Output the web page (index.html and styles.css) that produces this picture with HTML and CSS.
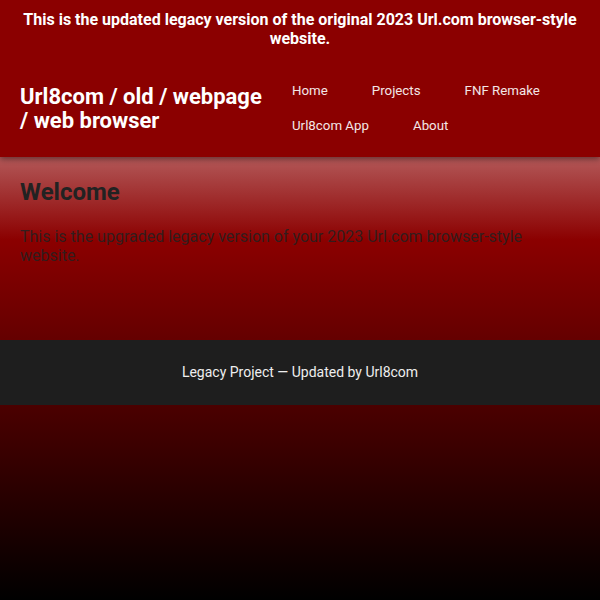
FILE: index.html
```html
<!DOCTYPE html>
<html lang="en">
<head>
<meta charset="utf-8">
<title>Url8com / old / webpage / web browser</title>
<link rel="stylesheet" href="styles.css">
</head>
<body>
<header class="site-header">
  <p class="banner">This is the updated legacy version of the original 2023 Url.com browser-style website.</p>
  <div class="header-bar">
    <h1 class="logo">Url8com / old / webpage / web browser</h1>
    <nav class="nav">
      <a href="#" class="nav-link">Home</a>
      <a href="#" class="nav-link">Projects</a>
      <a href="#" class="nav-link">FNF Remake</a>
      <a href="#" class="nav-link">Url8com App</a>
      <a href="#" class="nav-link">About</a>
    </nav>
  </div>
</header>
<main class="content">
  <h2 class="title">Welcome</h2>
  <p class="intro">This is the upgraded legacy version of your 2023 Url.com browser-style website.</p>
</main>
<footer class="site-footer">
  <p class="footer-text">Legacy Project — Updated by Url8com</p>
</footer>
</body>
</html>
```
FILE: styles.css
```css
html {
  background: #000;
}
body {
  margin: 0;
  min-height: 100vh;
  font-family: Roboto, "Liberation Sans", Arial, sans-serif;
  background: linear-gradient(to bottom, #ffffff 0%, #8b0000 40%, #000000 100%);
  color: #fff;
}
.site-header {
  background: #8b0000;
  box-shadow: 0 2px 6px rgba(0, 0, 0, 0.45);
  position: relative;
}
.banner {
  margin: 0;
  padding: 10px 20px 14px;
  font-size: 16px;
  line-height: 19px;
  font-weight: 700;
  text-align: center;
}
.header-bar {
  display: flex;
  align-items: center;
  padding: 21px 20px 23px;
  gap: 22px;
}
.logo {
  margin: 0;
  width: 250px;
  flex: none;
  font-size: 22px;
  line-height: 24px;
  font-weight: 700;
}
.nav {
  display: flex;
  flex-wrap: wrap;
  column-gap: 44px;
  row-gap: 19px;
}
.nav-link {
  color: #f3e6e6;
  text-decoration: none;
  font-size: 13.3px;
  line-height: 16px;
}
.content {
  box-sizing: border-box;
  min-height: 183px;
  padding: 21px 20px 20px;
  color: #222;
}
.title {
  margin: 0 0 21px;
  font-size: 24px;
  font-weight: 700;
}
.intro {
  margin: 0;
  font-size: 16px;
  color: rgba(34, 34, 34, 0.85);
}
.site-footer {
  background: #1e1e1e;
  padding: 24px 20px;
  text-align: center;
}
.footer-text {
  margin: 0;
  font-size: 14px;
  line-height: 17px;
  color: #eee;
}
```
